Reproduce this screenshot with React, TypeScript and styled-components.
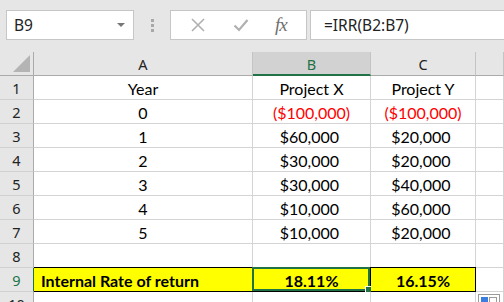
import React from "react";
import styled, { createGlobalStyle, css } from "styled-components";

const GlobalStyle = createGlobalStyle`
  html, body {
    margin: 0;
    padding: 0;
    background: #e6e6e6;
  }
  body {
    width: 504px;
    height: 302px;
    overflow: hidden;
  }
`;

const EXCEL_GREEN = "#217346";
const GRID = "#d4d4d4";

const Page = styled.div`
  width: 504px;
  height: 302px;
  overflow: hidden;
  position: relative;
  background: #e6e6e6;
  font-family: Lato, "Liberation Sans", sans-serif;
`;

const FormulaBar = styled.div`
  display: flex;
  align-items: center;
  height: 30px;
  padding: 10px 0 12px 6px;
`;

const NameBox = styled.div`
  box-sizing: border-box;
  width: 128px;
  height: 30px;
  background: #fff;
  border: 1px solid #c6c6c6;
  display: flex;
  align-items: center;
  justify-content: space-between;
  padding: 0 8px 0 7px;
  font-family: "Noto Sans", "Open Sans", sans-serif;
  font-size: 15.5px;
  color: #222;
`;

const Caret = styled.span`
  width: 0;
  height: 0;
  border-left: 4px solid transparent;
  border-right: 4px solid transparent;
  border-top: 4px solid #777;
`;

const Grip = styled.div`
  display: flex;
  flex-direction: column;
  gap: 2px;
  margin: 0 16px 0 17px;

  span {
    width: 3px;
    height: 3px;
    background: #a8a8a8;
  }
`;

const ButtonsBox = styled.div`
  box-sizing: border-box;
  width: 137px;
  height: 30px;
  background: #fff;
  border: 1px solid #c6c6c6;
  display: flex;
  align-items: center;
  justify-content: space-around;
  padding: 0 6px;
`;

const Fx = styled.span`
  font-family: "Liberation Serif", serif;
  font-style: italic;
  font-size: 19px;
  color: #707070;
  letter-spacing: -1px;
`;

const FormulaInput = styled.div`
  box-sizing: border-box;
  flex: 1;
  height: 30px;
  margin-left: 3px;
  background: #fff;
  border: 1px solid #c6c6c6;
  border-right: none;
  display: flex;
  align-items: center;
  padding-left: 13px;
  font-family: "Noto Sans", "Open Sans", sans-serif;
  font-size: 15.5px;
  color: #222;
`;

const Sheet = styled.div`
  display: grid;
  grid-template-columns: 34px 219px 118px 105px 1fr;
  grid-auto-rows: 24px;
`;

const Corner = styled.div`
  box-sizing: border-box;
  position: relative;
  background: #e6e6e6;
  border-right: 1px solid #ababab;
  border-bottom: 1px solid #ababab;

  &::after {
    content: "";
    position: absolute;
    right: 3px;
    bottom: 3px;
    width: 0;
    height: 0;
    border-left: 17px solid transparent;
    border-bottom: 17px solid #b4b4b4;
  }
`;

const ColHeader = styled.div<{ $selected?: boolean }>`
  box-sizing: border-box;
  display: flex;
  align-items: center;
  justify-content: center;
  background: ${(p) => (p.$selected ? "#d2d2d2" : "#e6e6e6")};
  border-right: 1px solid #c4c4c4;
  border-bottom: ${(p) =>
    p.$selected ? `2px solid ${EXCEL_GREEN}` : "1px solid #ababab"};
  color: ${(p) => (p.$selected ? EXCEL_GREEN : "#222")};
  font-family: "Noto Sans", "Open Sans", sans-serif;
  font-size: 14.5px;
  padding-top: 1px;
`;

const RowHeader = styled.div<{ $selected?: boolean }>`
  box-sizing: border-box;
  display: flex;
  align-items: center;
  justify-content: center;
  background: #e6e6e6;
  border-right: 1px solid ${(p) => (p.$selected ? EXCEL_GREEN : "#ababab")};
  border-bottom: 1px solid #d0d0d0;
  color: ${(p) => (p.$selected ? EXCEL_GREEN : "#222")};
  font-family: "Noto Sans", "Open Sans", sans-serif;
  font-size: 14.5px;
`;

const Cell = styled.div<{
  $align?: "left" | "center";
  $red?: boolean;
  $total?: boolean;
}>`
  box-sizing: border-box;
  position: relative;
  display: flex;
  align-items: center;
  justify-content: ${(p) => (p.$align === "left" ? "flex-start" : "center")};
  padding: ${(p) => (p.$align === "left" ? "2px 0 0 7px" : "2px 0 0 0")};
  background: #fff;
  border-right: 1px solid ${GRID};
  border-bottom: 1px solid ${GRID};
  font-size: 16px;
  color: ${(p) => (p.$red ? "#ff0000" : "#000")};
  white-space: nowrap;

  ${(p) =>
    p.$total &&
    css`
      background: #ffff00;
      font-weight: 700;
      border-right-color: #000;
      border-bottom-color: #000;
      box-shadow: 0 -1px 0 #000;
    `}
`;

const Pad = styled.span`
  visibility: hidden;
`;

const Selection = styled.div`
  position: absolute;
  top: -1px;
  left: -1px;
  right: 0;
  bottom: 0;
  border: 2px solid ${EXCEL_GREEN};
  pointer-events: none;
`;

const FillHandle = styled.div`
  position: absolute;
  right: -4px;
  bottom: -4px;
  width: 5px;
  height: 5px;
  background: ${EXCEL_GREEN};
  border: 1px solid #fff;
`;

const QuickAnalysis = styled.div`
  position: absolute;
  left: 478px;
  top: 294px;
  width: 22px;
  height: 16px;
  box-sizing: border-box;
  background: #fff;
  border: 1px solid #9a9a9a;
  display: flex;
  gap: 1px;
  padding: 2px;

  span {
    width: 8px;
    height: 8px;
    box-sizing: border-box;
  }
  span:first-child {
    background: #3b7de0;
  }
  span:last-child {
    border: 1px solid #9a9a9a;
  }
`;

type Value = string | number;

interface Row {
  n: number;
  a?: string;
  b?: Value;
  c?: Value;
}

const rows: Row[] = [
  { n: 1, a: "Year", b: "Project X", c: "Project Y" },
  { n: 2, a: "0", b: -100000, c: -100000 },
  { n: 3, a: "1", b: 60000, c: 20000 },
  { n: 4, a: "2", b: 30000, c: 20000 },
  { n: 5, a: "3", b: 30000, c: 40000 },
  { n: 6, a: "4", b: 10000, c: 60000 },
  { n: 7, a: "5", b: 10000, c: 20000 },
  { n: 8 },
];

function ValueCell({ v }: { v?: Value }) {
  if (typeof v === "number") {
    const text = "$" + Math.abs(v).toLocaleString("en-US");
    if (v < 0) return <Cell $red>({text})</Cell>;
    return (
      <Cell>
        {text}
        <Pad>)</Pad>
      </Cell>
    );
  }
  return <Cell>{v}</Cell>;
}

const XIcon = () => (
  <svg width="16" height="16" viewBox="0 0 16 16">
    <path d="M2 2 L14 14 M14 2 L2 14" stroke="#b0b0b0" strokeWidth="1.6" fill="none" />
  </svg>
);

const CheckIcon = () => (
  <svg width="16" height="16" viewBox="0 0 16 16">
    <path d="M1.5 8.5 L6 13 L14.5 3" stroke="#b0b0b0" strokeWidth="2.2" fill="none" />
  </svg>
);

export default function App() {
  return (
    <Page>
      <GlobalStyle />
      <FormulaBar>
        <NameBox>
          B9
          <Caret />
        </NameBox>
        <Grip>
          <span />
          <span />
          <span />
        </Grip>
        <ButtonsBox>
          <XIcon />
          <CheckIcon />
          <Fx>fx</Fx>
        </ButtonsBox>
        <FormulaInput>=IRR(B2:B7)</FormulaInput>
      </FormulaBar>

      <Sheet>
        <Corner />
        <ColHeader>A</ColHeader>
        <ColHeader $selected>B</ColHeader>
        <ColHeader>C</ColHeader>
        <ColHeader />

        {rows.map((r) => (
          <React.Fragment key={r.n}>
            <RowHeader>{r.n}</RowHeader>
            <Cell>{r.a}</Cell>
            <ValueCell v={r.b} />
            <ValueCell v={r.c} />
            <Cell />
          </React.Fragment>
        ))}

        <RowHeader $selected>9</RowHeader>
        <Cell $align="left" $total>
          Internal Rate of return
        </Cell>
        <Cell $total>
          18.11%
          <Selection>
            <FillHandle />
          </Selection>
        </Cell>
        <Cell $total>16.15%</Cell>
        <Cell />

        <RowHeader>10</RowHeader>
        <Cell />
        <Cell />
        <Cell />
        <Cell />
      </Sheet>

      <QuickAnalysis>
        <span />
        <span />
      </QuickAnalysis>
    </Page>
  );
}
